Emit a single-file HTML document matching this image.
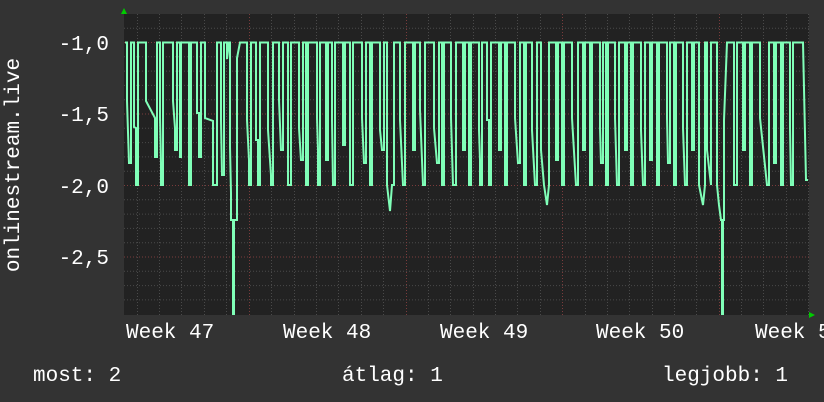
<!DOCTYPE html>
<html><head><meta charset="utf-8"><style>
html,body{margin:0;padding:0;background:#333;width:824px;height:402px;overflow:hidden}
svg{display:block}
text{font-family:"Liberation Mono","DejaVu Sans Mono",monospace;fill:#fff;font-size:21px}
</style></head><body>
<svg width="824" height="402" xmlns="http://www.w3.org/2000/svg">
<rect x="0" y="0" width="824" height="402" fill="#333"/>
<rect x="124" y="14" width="685" height="301" fill="#222"/>
<g stroke="#4a4a4a" stroke-dasharray="1,2" stroke-width="1">
<line x1="124" x2="809" y1="28.2" y2="28.2"/>
<line x1="124" x2="809" y1="56.8" y2="56.8"/><line x1="124" x2="809" y1="71.1" y2="71.1"/><line x1="124" x2="809" y1="85.4" y2="85.4"/><line x1="124" x2="809" y1="99.7" y2="99.7"/>
<line x1="124" x2="809" y1="128.3" y2="128.3"/><line x1="124" x2="809" y1="142.6" y2="142.6"/><line x1="124" x2="809" y1="156.9" y2="156.9"/><line x1="124" x2="809" y1="171.2" y2="171.2"/>
<line x1="124" x2="809" y1="199.8" y2="199.8"/><line x1="124" x2="809" y1="214.1" y2="214.1"/><line x1="124" x2="809" y1="228.4" y2="228.4"/><line x1="124" x2="809" y1="242.7" y2="242.7"/>
<line x1="124" x2="809" y1="271.3" y2="271.3"/><line x1="124" x2="809" y1="285.6" y2="285.6"/><line x1="124" x2="809" y1="299.9" y2="299.9"/>
<path d="M137.5,14V315M159.5,14V315M181.5,14V315M204.5,14V315M226.5,14V315M271.5,14V315M294.5,14V315M316.5,14V315M338.5,14V315M361.5,14V315M383.5,14V315M428.5,14V315M450.5,14V315M473.5,14V315M495.5,14V315M517.5,14V315M540.5,14V315M585.5,14V315M607.5,14V315M629.5,14V315M652.5,14V315M674.5,14V315M696.5,14V315M741.5,14V315M763.5,14V315M786.5,14V315M808.5,14V315"/>
</g>
<g stroke="#7a3c3c" stroke-dasharray="1,2">
<line x1="124" x2="809" y1="42.5" y2="42.5"/><line x1="124" x2="809" y1="114" y2="114"/><line x1="124" x2="809" y1="185.5" y2="185.5"/><line x1="124" x2="809" y1="257" y2="257"/>
<path d="M249.5,14V315M406.5,14V315M562.5,14V315M719.5,14V315"/>
</g>
<path fill="none" stroke="#80ffb8" stroke-width="2" stroke-linejoin="miter" d="M125,42.5 h2 V101 L129,163 h2 V42.5 h3 V127 L136,128 V185 h2 V42.5 h8 V101 L155,118 V157 h2 V42.5 h3 V117 L161,163 V185 h2 V42.5 h10 V101 L175,128 V150 h2 V42.5 h3 V157 h1 V42.5 h8 V185 h2 V42.5 h6 V113 h2 V157 h2 V42.5 h4 V118 L213,121 V185 h4 V42.5 h4 V121 L222,175 h2 V42.5 h3 V59 L229,42.5 h1 V147 L231,193 V220 h2 V314 h1 V220 h3 V58 L240,42.5 h7 V120 L249,160 V185 h2 V42.5 h5 V140 h2 V185 h2 V42.5 h8 V130 L271,175 V185 h2 V42.5 h6 V100 L281,150 h2 V42.5 h5 V185 h3 V42.5 h8 V128 L301,160 h2 V42.5 h3 V185 h2 V42.5 h9 V118 L318,150 V185 h2 V42.5 h6 V160 h2 V42.5 h4 V120 L333,185 h2 V42.5 h8 V145 h2 V42.5 h5 V185 h3 V42.5 h9 V118 L364,163 h2 V42.5 h4 V185 h2 V42.5 h8 V130 L382,150 h2 V42.5 h3 V185 L390,211 L392,185 h2 V42.5 h6 V120 L403,185 h2 V42.5 h8 V150 h2 V42.5 h5 V110 L423,185 h2 V42.5 h9 V128 L437,163 h2 V42.5 h3 V185 h2 V42.5 h7 V118 L453,185 h3 V42.5 h7 V150 h2 V42.5 h4 V185 h2 V42.5 h8 V130 L480,160 V185 h2 V42.5 h5 V120 h2 V185 h2 V42.5 h8 V150 h2 V42.5 h4 V128 L505,185 h2 V42.5 h8 V118 L518,163 h2 V42.5 h4 V185 h2 V42.5 h6 V130 L535,185 h2 V42.5 h4 V150 L544,185 L547,205 L549,185 V42.5 h7 V160 h2 V42.5 h4 V185 h2 V42.5 h8 V118 L576,185 h2 V42.5 h5 V150 h2 V42.5 h5 V185 h2 V42.5 h8 V128 L601,163 h2 V42.5 h3 V185 h2 V42.5 h7 V118 L617,185 h2 V42.5 h6 V150 h2 V42.5 h4 V185 h2 V42.5 h8 V130 L643,185 h2 V42.5 h5 V160 h2 V42.5 h5 V185 h2 V42.5 h8 V118 L668,163 h2 V42.5 h4 V185 h2 V42.5 h7 V128 L685,185 h2 V42.5 h5 V150 h2 V42.5 h5 V185 L703,205 L705,185 V42.5 h2 V150 L711,185 V42.5 h6 V185 L719,205 L721,220 h1 V314 h1 V220 h1 V120 L727,42.5 h7 V185 h3 V42.5 h6 V150 h2 V42.5 h5 V185 h2 V42.5 h8 V118 L767,185 h2 V42.5 h5 V163 h2 V42.5 h5 V185 h2 V42.5 h7 V128 L791,185 h2 V42.5 h10 L806,180 h2"/>
<polygon points="121,14 127,14 124,8" fill="#0c0"/>
<polygon points="809,312 809,318 815,315" fill="#0c0"/>
<text x="109" y="50" text-anchor="end">-1,0</text>
<text x="109" y="121" text-anchor="end">-1,5</text>
<text x="109" y="193" text-anchor="end">-2,0</text>
<text x="109" y="264" text-anchor="end">-2,5</text>
<text transform="translate(19,165) rotate(-90)" text-anchor="middle">onlinestream.live</text>
<text x="126" y="338">Week 47</text>
<text x="283" y="338">Week 48</text>
<text x="440" y="338">Week 49</text>
<text x="596" y="338">Week 50</text>
<text x="755" y="338">Week 51</text>
<text x="33" y="381">most: 2</text>
<text x="342" y="381">átlag: 1</text>
<text x="662" y="381">legjobb: 1</text>
</svg>
</body></html>
